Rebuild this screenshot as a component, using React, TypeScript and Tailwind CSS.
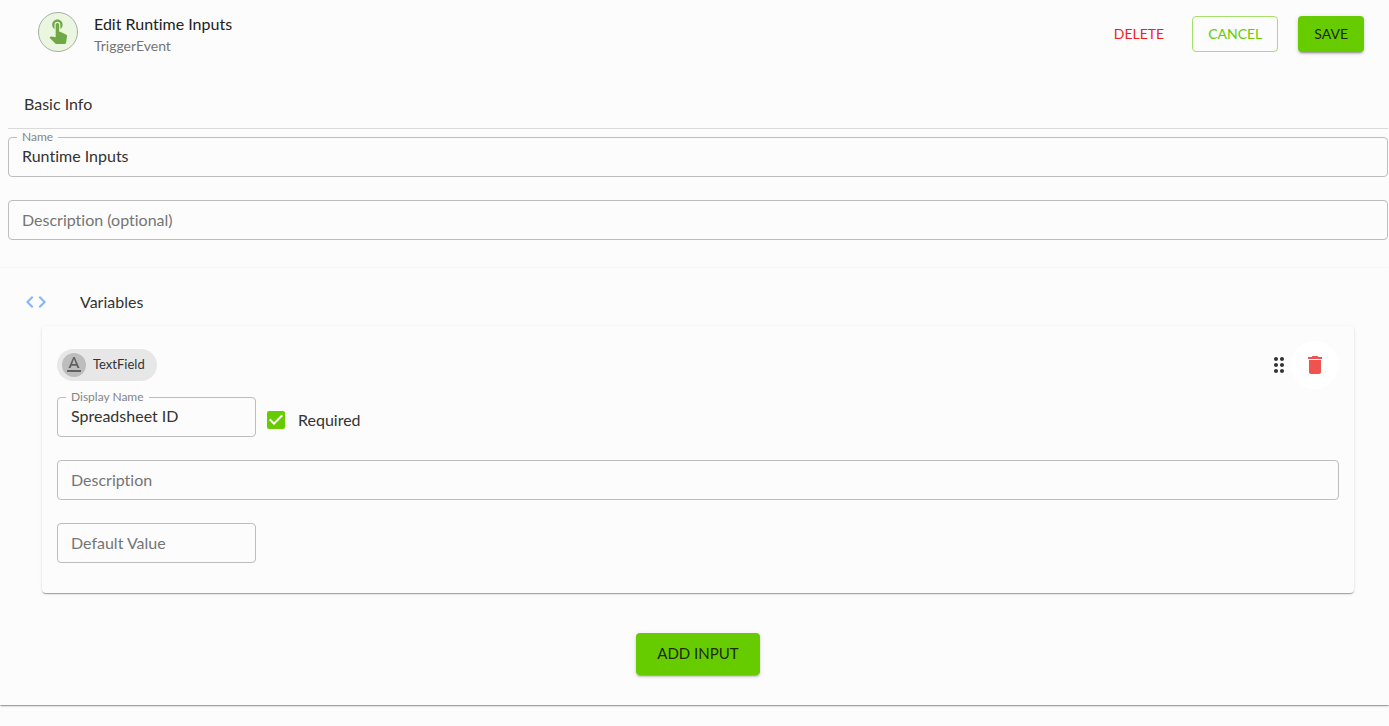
import { useState } from 'react';
import { MdTouchApp, MdCode, MdTextFormat, MdDragIndicator, MdDelete } from 'react-icons/md';

type FieldProps = {
  id: string;
  label: string;
  value: string;
  onChange: (value: string) => void;
  floating?: boolean;
  className?: string;
};

// Outlined text field: the label sits on the border when floating, otherwise it is the placeholder
function OutlinedField({ id, label, value, onChange, floating = false, className = '' }: FieldProps) {
  return (
    <div className={`relative ${className}`}>
      <input
        id={id}
        type="text"
        value={value}
        placeholder={floating ? undefined : label}
        aria-label={floating ? undefined : label}
        onChange={e => onChange(e.target.value)}
        className={`block w-full h-10 px-[13px] rounded border border-[#bdbdbd] bg-transparent text-base text-[#333]
          placeholder:text-[#757575] placeholder:opacity-100 focus:outline-none focus:border-[#66cc00]
          ${floating ? 'pb-1' : 'pb-0.5'}`}
      />
      {floating && (
        <label htmlFor={id} className="absolute left-[9px] -top-2 px-[5px] bg-[#fcfcfc] text-xs text-[#858585]">
          {label}
        </label>
      )}
    </div>
  );
}

const BUTTON_SHADOW =
  'shadow-[0_3px_1px_-2px_rgba(0,0,0,0.2),0_2px_2px_0_rgba(0,0,0,0.14),0_1px_5px_0_rgba(0,0,0,0.12)]';
const PAPER_SHADOW =
  'shadow-[0_2px_1px_-1px_rgba(0,0,0,0.2),0_1px_1px_0_rgba(0,0,0,0.14),0_1px_3px_0_rgba(0,0,0,0.12)]';

export default function App() {
  const [name, setName] = useState('Runtime Inputs');
  const [description, setDescription] = useState('');
  const [displayName, setDisplayName] = useState('Spreadsheet ID');
  const [required, setRequired] = useState(true);
  const [fieldDescription, setFieldDescription] = useState('');
  const [defaultValue, setDefaultValue] = useState('');

  return (
    <div className="min-h-screen bg-[#fcfcfc] font-['Lato',sans-serif] text-[#333] [font-variant-ligatures:none]">
      {/* Header */}
      <header className="flex items-start pt-3 pl-[38px] pr-[25px]">
        <div className="w-10 h-10 shrink-0 rounded-full border border-[#a8b0a4] bg-[#ebf6e0] flex items-center justify-center pb-1">
          <MdTouchApp className="w-7 h-7 text-[#6fa844]" />
        </div>
        <div className="ml-4">
          <h1 className="text-base text-[#212121]">Edit Runtime Inputs</h1>
          <p className="text-sm text-[#757575]">TriggerEvent</p>
        </div>
        <div className="ml-auto mt-1 flex items-center gap-5">
          <button type="button" className="h-9 px-2 rounded text-sm text-[#f21d1d]">DELETE</button>
          <button type="button" className="h-9 px-[15px] rounded border border-[#a5e06a] text-sm text-[#66cc00]">CANCEL</button>
          <button type="button" className={`h-9 px-4 rounded bg-[#66cc00] text-sm text-[#1b2b0b] ${BUTTON_SHADOW}`}>SAVE</button>
        </div>
      </header>

      {/* Basic info */}
      <section className="pt-9 pl-2 pr-px pb-7">
        <h2 className="px-4 pb-3 mb-2 border-b border-[#dadada] text-base">Basic Info</h2>
        <OutlinedField id="name" label="Name" value={name} onChange={setName} floating className="mb-[23px]" />
        <OutlinedField id="description" label="Description (optional)" value={description} onChange={setDescription} />
      </section>

      {/* Variables */}
      <section className={`pt-[22px] pb-[30px] ${PAPER_SHADOW}`}>
        <div className="flex items-center pl-6 mb-3">
          <MdCode className="w-6 h-6 text-[#80b3ff]" />
          <h2 className="ml-8 text-base">Variables</h2>
        </div>

        <div className={`ml-[42px] mr-[35px] rounded px-[15px] pt-[15px] pb-[30px] ${PAPER_SHADOW}`}>
          <div className="flex items-center mb-2">
            <div className="h-8 flex items-center rounded-full bg-[#e7e7e7] pl-[5px] pr-3">
              <span className="w-6 h-6 rounded-full bg-[#bdbdbd] flex items-center justify-center">
                <MdTextFormat className="w-6 h-6 text-[#616161]" />
              </span>
              <span className="ml-[7px] text-[13px]">TextField</span>
            </div>
            <button type="button" aria-label="Reorder" className="ml-auto cursor-grab">
              <MdDragIndicator className="w-6 h-6" />
            </button>
            <button type="button" aria-label="Remove variable" className="w-12 h-12 rounded-full bg-white flex items-center justify-center">
              <MdDelete className="w-6 h-6 text-[#f0524f]" />
            </button>
          </div>

          <div className="flex items-start mb-[17px]">
            <OutlinedField id="display-name" label="Display Name" value={displayName} onChange={setDisplayName}
              floating className="w-[199px]" />
            <label className="ml-[11px] h-[46px] flex items-center gap-[13px] text-base">
              <span className="relative flex">
                <input
                  type="checkbox"
                  checked={required}
                  onChange={e => setRequired(e.target.checked)}
                  className="peer appearance-none w-[18px] h-[18px] rounded-xs border-2 border-[#757575] checked:border-[#66cc00] checked:bg-[#66cc00]"
                />
                <svg viewBox="3 3 18 18" className="absolute inset-0 w-[18px] h-[18px] hidden peer-checked:block pointer-events-none">
                  <path d="M10 17l-5-5 1.41-1.41L10 14.17l7.59-7.59L19 8l-9 9z" fill="#fff" />
                </svg>
              </span>
              Required
            </label>
          </div>

          <OutlinedField id="field-description" label="Description" value={fieldDescription}
            onChange={setFieldDescription} className="mb-[23px]" />
          <OutlinedField id="default-value" label="Default Value" value={defaultValue}
            onChange={setDefaultValue} className="w-[199px]" />
        </div>

        <div className="flex justify-center mt-10 pl-[7px]">
          <button type="button" className={`h-[42px] px-[21px] pb-0.5 rounded bg-[#66cc00] text-[15px] text-[#1b2b0b] ${BUTTON_SHADOW}`}>
            ADD INPUT
          </button>
        </div>
      </section>
    </div>
  );
}
